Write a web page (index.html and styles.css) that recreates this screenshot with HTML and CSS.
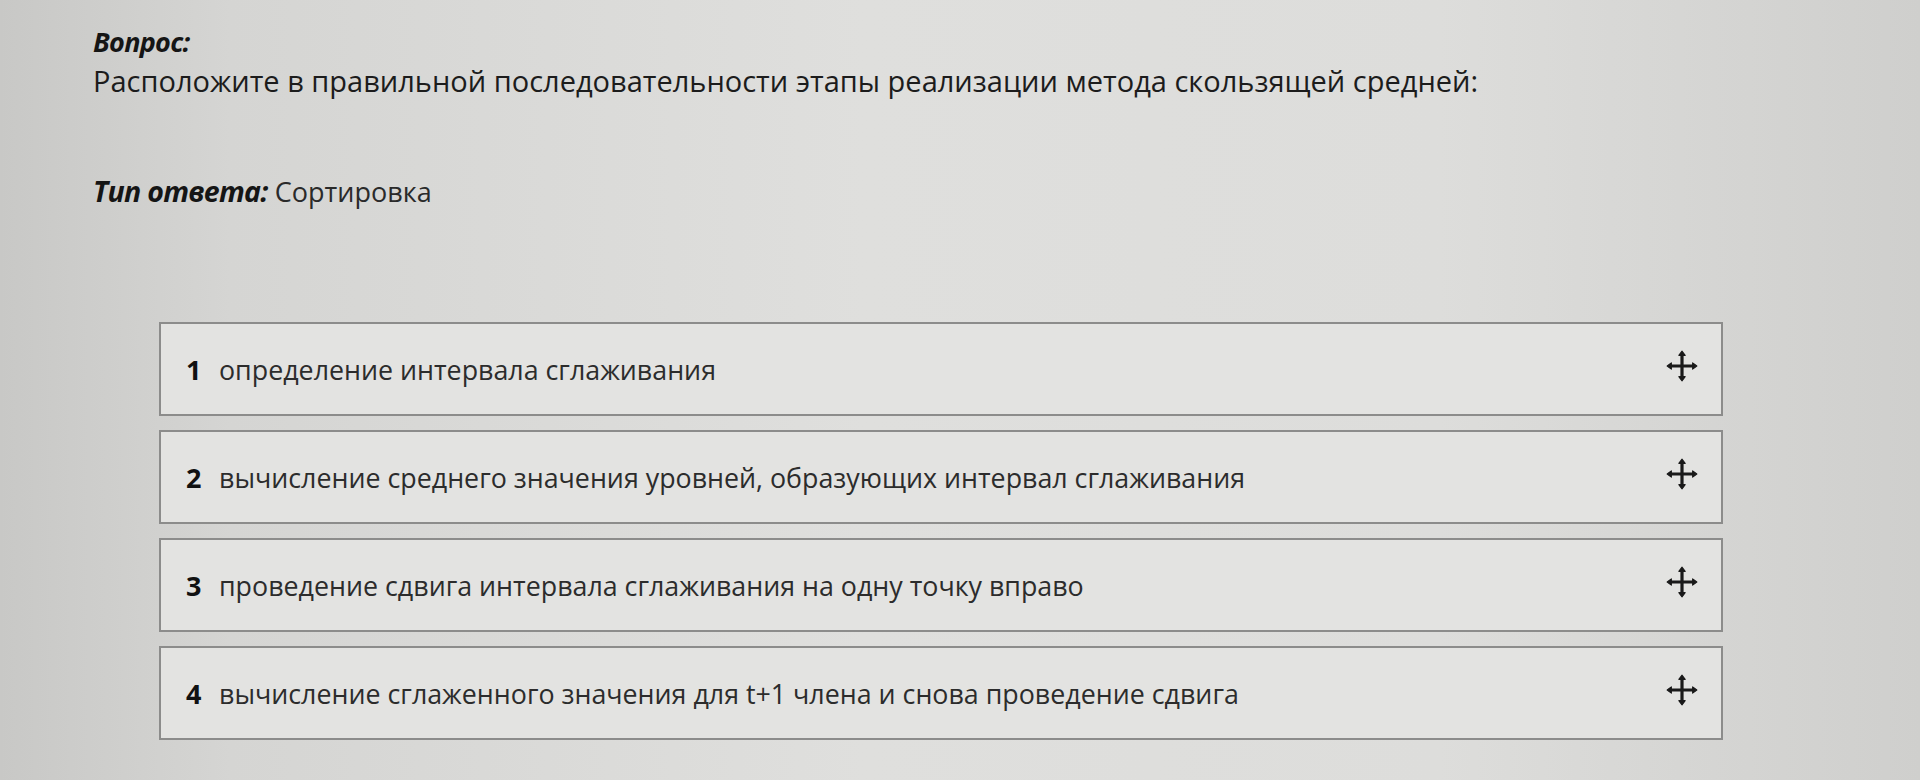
FILE: index.html
```html
<!DOCTYPE html>
<html lang="ru">
<head>
<meta charset="utf-8">
<title>Вопрос</title>
<link rel="stylesheet" href="styles.css">
</head>
<body>
<main class="page">
  <section class="question">
    <div class="label">Вопрос:</div>
    <div class="text">Расположите в правильной последовательности этапы реализации метода скользящей средней:</div>
  </section>
  <div class="type"><span class="label">Тип ответа:</span> Сортировка</div>
  <ol class="list">
    <li class="item"><span class="num">1</span><span class="itext">определение интервала сглаживания</span><svg class="move" viewBox="0 0 32 32"><path d="M16 4v24M4 16h24" /><path class="h" d="M16 2l-3 4h6zM16 30l-3-4h6zM2 16l4-3v6zM30 16l-4-3v6z"/></svg></li>
    <li class="item"><span class="num">2</span><span class="itext">вычисление среднего значения уровней, образующих интервал сглаживания</span><svg class="move" viewBox="0 0 32 32"><path d="M16 4v24M4 16h24" /><path class="h" d="M16 2l-3 4h6zM16 30l-3-4h6zM2 16l4-3v6zM30 16l-4-3v6z"/></svg></li>
    <li class="item"><span class="num">3</span><span class="itext">проведение сдвига интервала сглаживания на одну точку вправо</span><svg class="move" viewBox="0 0 32 32"><path d="M16 4v24M4 16h24" /><path class="h" d="M16 2l-3 4h6zM16 30l-3-4h6zM2 16l4-3v6zM30 16l-4-3v6z"/></svg></li>
    <li class="item"><span class="num">4</span><span class="itext">вычисление сглаженного значения для t+1 члена и снова проведение сдвига</span><svg class="move" viewBox="0 0 32 32"><path d="M16 4v24M4 16h24" /><path class="h" d="M16 2l-3 4h6zM16 30l-3-4h6zM2 16l4-3v6zM30 16l-4-3v6z"/></svg></li>
  </ol>
</main>
</body>
</html>
```
FILE: styles.css
```css
html, body {
  margin: 0;
  height: 100%;
}
body {
  background: linear-gradient(90deg, #c8c8c6 0%, #d5d5d3 12%, #dfdfdd 45%, #dddddb 75%, #cfcfcd 100%);
  font-family: "Open Sans", "Noto Sans", sans-serif;
  color: #222;
  overflow: hidden;
}
.page {
  padding: 24px 0 0 93px;
}
.label {
  font-weight: 700;
  font-style: italic;
  color: #151515;
  letter-spacing: -0.7px;
}
.question .label {
  font-size: 27px;
  line-height: 36px;
}
.question .text {
  font-size: 29px;
  line-height: 42px;
  color: #1c1c1c;
}
.type {
  margin-top: 69px;
  font-size: 27px;
  line-height: 40px;
  color: #2a2a2a;
}
.type .label {
  font-size: 28.5px;
}
.list {
  list-style: none;
  margin: 110px 0 0 66px;
  padding: 0;
  width: 1564px;
  display: flex;
  flex-direction: column;
  gap: 14px;
}
.item {
  height: 90px;
  border: 2px solid #8c8c8b;
  background: #e3e3e1;
  display: flex;
  align-items: center;
  padding: 0 22px 0 25px;
}
.num {
  font-weight: 700;
  font-size: 27px;
  color: #111;
  width: 33px;
}
.itext {
  font-size: 26.8px;
  color: #2c2c2c;
  flex: 1;
}
.move {
  width: 34px;
  height: 34px;
  margin-top: -6px;
}
.move path {
  stroke: #1a1a1a;
  stroke-width: 3;
  fill: none;
}
.move path.h {
  fill: #1a1a1a;
  stroke-width: 1;
  stroke-linejoin: round;
}
```
